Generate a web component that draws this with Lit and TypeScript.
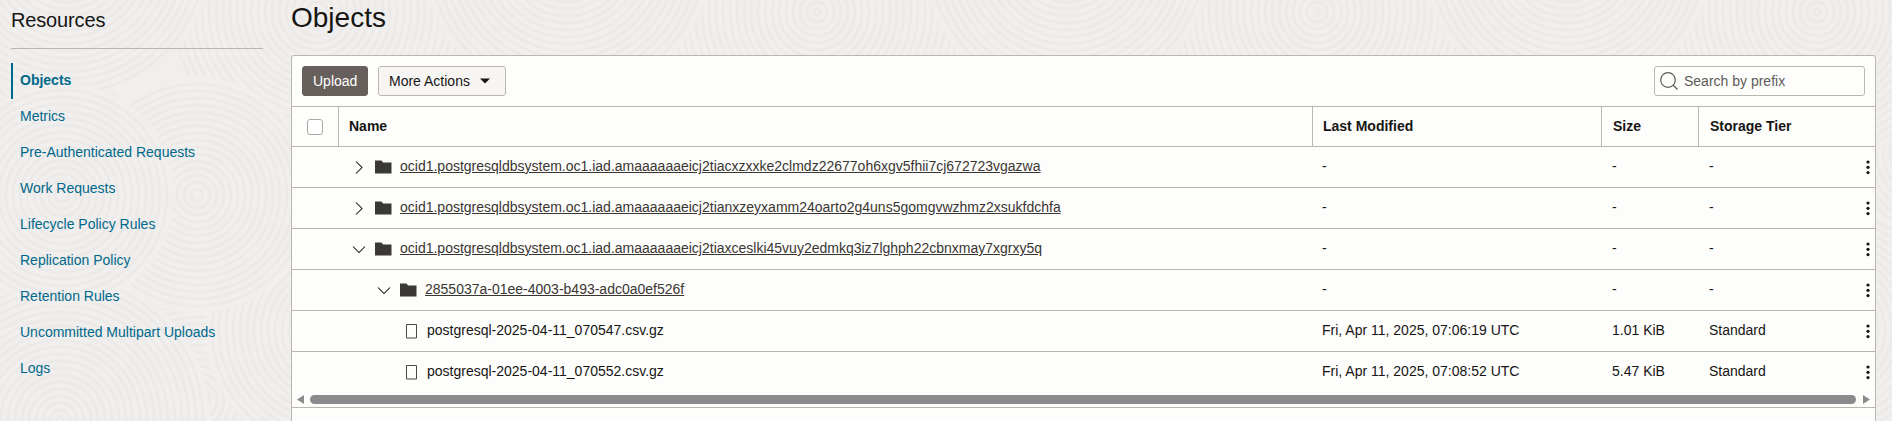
import { LitElement, html, css, svg } from "lit";
import { customElement } from "lit/decorators.js";
import { classMap } from "lit/directives/class-map.js";

interface Entry {
  kind: "folder" | "file";
  name: string;
  depth: number;
  open?: boolean;
  modified?: string;
  size?: string;
  tier?: string;
}

const LINKS = [
  "Objects",
  "Metrics",
  "Pre-Authenticated Requests",
  "Work Requests",
  "Lifecycle Policy Rules",
  "Replication Policy",
  "Retention Rules",
  "Uncommitted Multipart Uploads",
  "Logs",
];

const ENTRIES: Entry[] = [
  { kind: "folder", depth: 0, name: "ocid1.postgresqldbsystem.oc1.iad.amaaaaaaeicj2tiacxzxxke2clmdz22677oh6xgv5fhii7cj672723vgazwa" },
  { kind: "folder", depth: 0, name: "ocid1.postgresqldbsystem.oc1.iad.amaaaaaaeicj2tianxzeyxamm24oarto2g4uns5gomgvwzhmz2xsukfdchfa" },
  { kind: "folder", depth: 0, open: true, name: "ocid1.postgresqldbsystem.oc1.iad.amaaaaaaeicj2tiaxceslki45vuy2edmkq3iz7lghph22cbnxmay7xgrxy5q" },
  { kind: "folder", depth: 1, open: true, name: "2855037a-01ee-4003-b493-adc0a0ef526f" },
  { kind: "file", depth: 2, name: "postgresql-2025-04-11_070547.csv.gz", modified: "Fri, Apr 11, 2025, 07:06:19 UTC", size: "1.01 KiB", tier: "Standard" },
  { kind: "file", depth: 2, name: "postgresql-2025-04-11_070552.csv.gz", modified: "Fri, Apr 11, 2025, 07:08:52 UTC", size: "5.47 KiB", tier: "Standard" },
];

// Discs of concentric rings, painted in order so later ones overlap earlier ones.
const DISCS = [
  [440, 150, 190],
  [197, 400, 160],
  [317, 12, 150],
  [60, 420, 150],
  [330, 330, 125],
  [67, -45, 145],
  [197, 195, 118],
  [62, 195, 112],
];

const rings = (cx: number, cy: number, r: number) => {
  const list: number[] = [];
  for (let k = r - 7; k > 2; k -= 7) list.push(k);
  return svg`<circle cx=${cx} cy=${cy} r=${r} fill="#f0efed"></circle>
    ${list.map((k) => svg`<circle cx=${cx} cy=${cy} r=${k} fill="none" stroke="#ebeae8" stroke-width="2.4"></circle>`)}`;
};

@customElement("ring-backdrop")
export class RingBackdrop extends LitElement {
  static styles = css`
    :host { display: block; position: absolute; inset: 0; overflow: hidden; }
    svg { display: block; filter: blur(0.5px); }
  `;
  render() {
    return html`<svg width="1892" height="421">
      <defs>
        <pattern id="p" width="500" height="500" patternUnits="userSpaceOnUse">
          ${DISCS.map(([x, y, r]) => [-500, 0, 500].map((d) => rings(x + d, y, r)))}
        </pattern>
      </defs>
      <rect width="1892" height="421" fill="url(#p)"></rect>
    </svg>`;
  }
}

@customElement("app-root")
export class AppRoot extends LitElement {
  static styles = css`
    :host {
      display: block;
      position: relative;
      height: 421px;
      overflow: hidden;
      background: #f0efed;
      color: #161513;
      font: 14px/20px "Liberation Sans", Arial, sans-serif;
    }
    * { box-sizing: border-box; }
    svg { display: block; flex: none; }
    .page { position: relative; display: flex; height: 421px; padding-left: 11px; }
    .side { width: 252px; margin-right: 28px; flex: none; }
    .side-title { margin: 0; height: 49px; padding-top: 8px; font-size: 20px; line-height: 24px; font-weight: 400; letter-spacing: -0.15px; border-bottom: 1px solid #bcb6b1; }
    .links { display: flex; flex-direction: column; padding-top: 14px; }
    .link { height: 36px; padding: 7px 0 0 9px; color: #00688c; white-space: nowrap; text-decoration: none; }
    .link.active { font-weight: 700; border-left: 2px solid #00688c; padding-left: 7px; }
    .main { width: 1585px; flex: none; }
    .title { margin: 0; height: 55px; padding-top: 1px; font-size: 28px; line-height: 34px; font-weight: 400; }
    .panel { height: 380px; border: 1px solid #bcb6b1; border-radius: 3px; background: #fdfdfc; }
    .toolbar { display: flex; align-items: center; height: 50px; padding: 0 10px; }
    .btn { display: flex; align-items: center; height: 30px; border: 1px solid #bcb6b1; border-radius: 3px; background: #f7f5f4; color: #161513; font: inherit; padding: 0 11px; }
    .btn.primary { background: #665f5b; border-color: #665f5b; color: #fff; width: 66px; padding: 0 10px; }
    .btn.more { width: 128px; margin-left: 10px; gap: 10px; padding: 0 10px; white-space: nowrap; }
    .search { display: flex; align-items: center; width: 211px; height: 30px; margin-left: auto; border: 1px solid #bcb6b1; border-radius: 3px; padding-left: 5px; gap: 6px; color: #5f5b58; }
    .row { display: grid; grid-template-columns: 46px 974px 289px 97px 1fr; height: 41px; border-bottom: 1px solid #bcb6b1; }
    .row.head { height: 41px; border-top: 1px solid #bcb6b1; font-weight: 700; }
    .row.last { height: 43px; border-bottom: 0; }
    .head .cell { border-left: 1px solid #bcb6b1; padding: 9px 0 0 10px; }
    .head .cell.wide { padding-left: 11px; }
    .check { width: 16px; height: 16px; margin: 12px 0 0 15px; border: 1px solid #aea8a3; border-radius: 3px; background: #fff; }
    .name { display: flex; height: 40px; white-space: nowrap; }
    .name.d0 { padding-left: 13px; }
    .name.d1 { padding-left: 38px; }
    .name.d2 { padding-left: 68px; }
    .chev { margin-top: 12px; }
    .folder { margin: 13px 0 0 8px; }
    .file { margin-top: 13px; }
    .label { padding: 9px 0 0 8px; }
    .label.plain { padding-left: 10px; }
    .link-name { color: #3a3632; text-decoration: underline; }
    .val { padding: 9px 0 0 10px; white-space: nowrap; }
    .val.wide { padding-left: 11px; }
    .tier { display: flex; justify-content: space-between; }
    .dots { margin: 4px 5px 0 0; }
    .bar { display: flex; align-items: center; height: 13px; padding: 0 5px 3px 5px; border-bottom: 1px solid #bcb6b1; }
    .thumb { flex: 1; height: 9px; margin: 0 7px 0 6px; border-radius: 5px; background: #8b8b8b; }
  `;

  private chevron(open?: boolean) {
    return html`<svg class="chev" width="16" height="16" viewBox="0 0 16 16" fill="none" stroke="#161513" stroke-width="1.05">
      <path d=${open ? "M2 5.5 8 11.5 14 5.5" : "M5 2.5 11 8.5 5 14.5"}></path>
    </svg>`;
  }

  private row(e: Entry, last: boolean) {
    const folder = e.kind === "folder";
    return html`<div class=${classMap({ row: true, last })}>
      <span></span>
      <div class="name d${e.depth}">
        ${folder
          ? html`${this.chevron(e.open)}
              <svg class="folder" width="17" height="14" viewBox="0 0 17 14"><path fill="#3a3936" d="M0 .5H6.5L8 2.5H16.5V13.5H0Z"></path></svg>
              <div class="label"><a class="link-name">${e.name}</a></div>`
          : html`<svg class="file" width="11" height="15" viewBox="0 0 11 15"><path fill="none" stroke="#4a4744" d="M.5 .5h10v13.5h-10z"></path></svg>
              <div class="label plain">${e.name}</div>`}
      </div>
      <div class="val">${e.modified ?? "-"}</div>
      <div class="val wide">${e.size ?? "-"}</div>
      <div class="val wide tier">
        <span>${e.tier ?? "-"}</span>
        <svg class="dots" width="4" height="16" viewBox="0 0 4 16" fill="#161513">
          <circle cx="2" cy="2" r="1.6"></circle><circle cx="2" cy="7.3" r="1.6"></circle><circle cx="2" cy="12.6" r="1.6"></circle>
        </svg>
      </div>
    </div>`;
  }

  render() {
    return html`
      <ring-backdrop></ring-backdrop>
      <div class="page">
        <nav class="side">
          <h2 class="side-title">Resources</h2>
          <div class="links">
            ${LINKS.map((l, i) => html`<a class=${classMap({ link: true, active: i === 0 })}>${l}</a>`)}
          </div>
        </nav>
        <main class="main">
          <h1 class="title">Objects</h1>
          <section class="panel">
            <div class="toolbar">
              <button class="btn primary">Upload</button>
              <button class="btn more">More Actions
                <svg width="10" height="6" viewBox="0 0 10 6"><path fill="#161513" d="M0 .5H10L5 5.5Z"></path></svg>
              </button>
              <div class="search">
                <svg width="18" height="18" viewBox="0 0 18 18" fill="none" stroke="#5f5b58" stroke-width="1.2">
                  <circle cx="8" cy="8" r="7.3"></circle><path d="M13 13 17.5 17.5"></path>
                </svg>
                <span>Search by prefix</span>
              </div>
            </div>
            <div class="row head">
              <div class="check"></div>
              <div class="cell">Name</div>
              <div class="cell">Last Modified</div>
              <div class="cell wide">Size</div>
              <div class="cell wide">Storage Tier</div>
            </div>
            ${ENTRIES.map((e, i) => this.row(e, i === ENTRIES.length - 1))}
            <div class="bar">
              <svg width="7" height="9" viewBox="0 0 7 9"><path fill="#8b8b8b" d="M7 0V9L0 4.5Z"></path></svg>
              <div class="thumb"></div>
              <svg width="7" height="9" viewBox="0 0 7 9"><path fill="#8b8b8b" d="M0 0V9L7 4.5Z"></path></svg>
            </div>
          </section>
        </main>
      </div>`;
  }
}
